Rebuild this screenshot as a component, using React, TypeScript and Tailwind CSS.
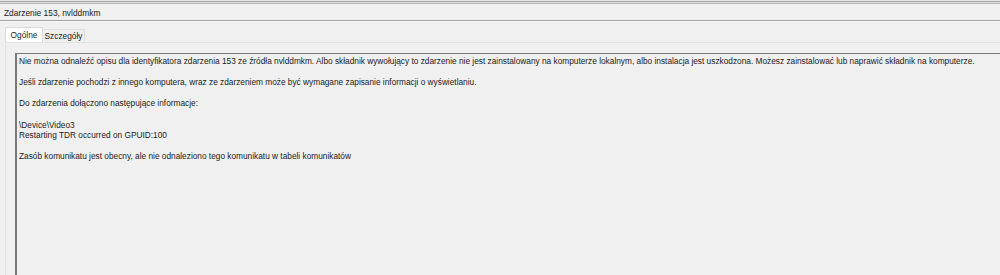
import React from "react";

const font = { fontFamily: '"Liberation Sans", Arial, sans-serif' };

export default function App() {
  return (
    <div className="w-[1000px] h-[275px] overflow-hidden bg-[#f0f0f0] text-[#1a1a1a] flex flex-col" style={font}>
      {/* top stripes */}
      <div className="h-px bg-[#e6e6e6]" />
      <div className="h-px bg-[#a8a8a8]" />
      <div className="h-px bg-[#dedede]" />
      <div className="h-px bg-[#b4b4b4]" />
      {/* title */}
      <div className="h-[16px] pl-[4px] flex items-center text-[8.4px] pt-[3px]">Zdarzenie 153, nvlddmkm</div>
      <div className="h-px bg-[#a0a0a0]" />
      <div className="h-px bg-[#fbfbfb]" />
      {/* tabs */}
      <div className="h-[20px] pl-[5px] flex items-end">
        <div className="h-[15px] w-[38px] bg-white border border-b-0 border-[#d9d9d9] flex items-center justify-center text-[8.3px]">
          Ogólne
        </div>
        <div className="h-[13px] w-[42px] border-t border-r border-[#e0e0e0] flex items-center justify-center text-[8.3px]">
          Szczegóły
        </div>
      </div>
      {/* panel */}
      <div className="flex-1 ml-[5px] border-l border-t border-[#e2e2e2] pl-[9px] pt-[10px] flex flex-col">
        <div className="flex-1 border-l-2 border-t border-l-[#7a7a7a] border-t-[#7a7a7a] pl-[2px] pt-[2px] text-[8.3px] leading-[10.6px] whitespace-pre">
          <div>Nie można odnaleźć opisu dla identyfikatora zdarzenia 153 ze źródła nvlddmkm. Albo składnik wywołujący to zdarzenie nie jest zainstalowany na komputerze lokalnym, albo instalacja jest uszkodzona. Możesz zainstalować lub naprawić składnik na komputerze.</div>
          <div>&nbsp;</div>
          <div>Jeśli zdarzenie pochodzi z innego komputera, wraz ze zdarzeniem może być wymagane zapisanie informacji o wyświetlaniu.</div>
          <div>&nbsp;</div>
          <div>Do zdarzenia dołączono następujące informacje:</div>
          <div>&nbsp;</div>
          <div>\Device\Video3</div>
          <div>Restarting TDR occurred on GPUID:100</div>
          <div>&nbsp;</div>
          <div>Zasób komunikatu jest obecny, ale nie odnaleziono tego komunikatu w tabeli komunikatów</div>
        </div>
      </div>
    </div>
  );
}
